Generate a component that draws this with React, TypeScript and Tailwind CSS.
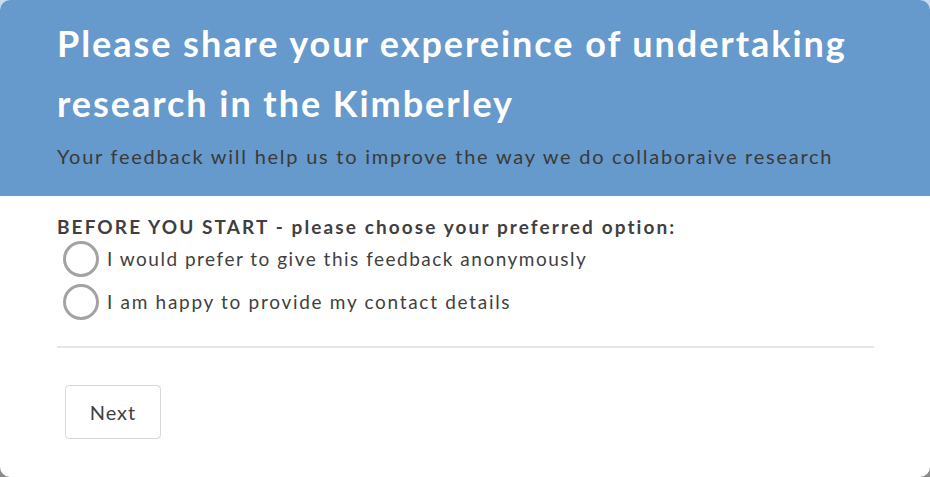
export default function App() {
  return (
    <div className="h-[477px] w-[930px] bg-[linear-gradient(#c9dcf0,#c9dcf0_40%,#8a8a8a_90%)] font-['Lato',sans-serif]">
      <div className="flex h-full flex-col overflow-hidden rounded-[10px] bg-white">
        {/* Header */}
        <div className="h-[196px] bg-[#6699cc] px-[57px] pt-[13px]">
          <h1 className="text-[36px] font-bold leading-[60px] tracking-[1.95px] text-white">
            Please share your expereince of undertaking research in the Kimberley
          </h1>
          <p className="mt-[9px] text-[20px] leading-[28px] tracking-[1.75px] text-[#3a3a3a]">
            Your feedback will help us to improve the way we do collaboraive research
          </p>
        </div>

        {/* Body */}
        <div className="px-[57px] pt-[20px] text-[#3f3f3f]">
          <p className="text-[19px] font-bold leading-[22px] tracking-[2.1px]">
            BEFORE YOU START - please choose your preferred option:
          </p>
          <label className="mt-[3px] flex items-center gap-[8px]">
            <span className="ml-[6px] h-[36px] w-[36px] rounded-full border-[3px] border-[#a3a3a3]" />
            <span className="text-[19px] tracking-[1.5px]">I would prefer to give this feedback anonymously</span>
          </label>
          <label className="mt-[7px] flex items-center gap-[8px]">
            <span className="ml-[6px] h-[36px] w-[36px] rounded-full border-[3px] border-[#a3a3a3]" />
            <span className="text-[19px] tracking-[1.7px]">I am happy to provide my contact details</span>
          </label>
          <div className="mt-[26px] h-[2px] w-[817px] bg-[#e6e6e6]" />
          <button className="ml-[8px] mt-[37px] h-[54px] w-[96px] rounded-[4px] border border-[#d6d6d6] text-[20px] tracking-[1px] text-[#3f3f3f]">
            Next
          </button>
        </div>
      </div>
    </div>
  )
}
